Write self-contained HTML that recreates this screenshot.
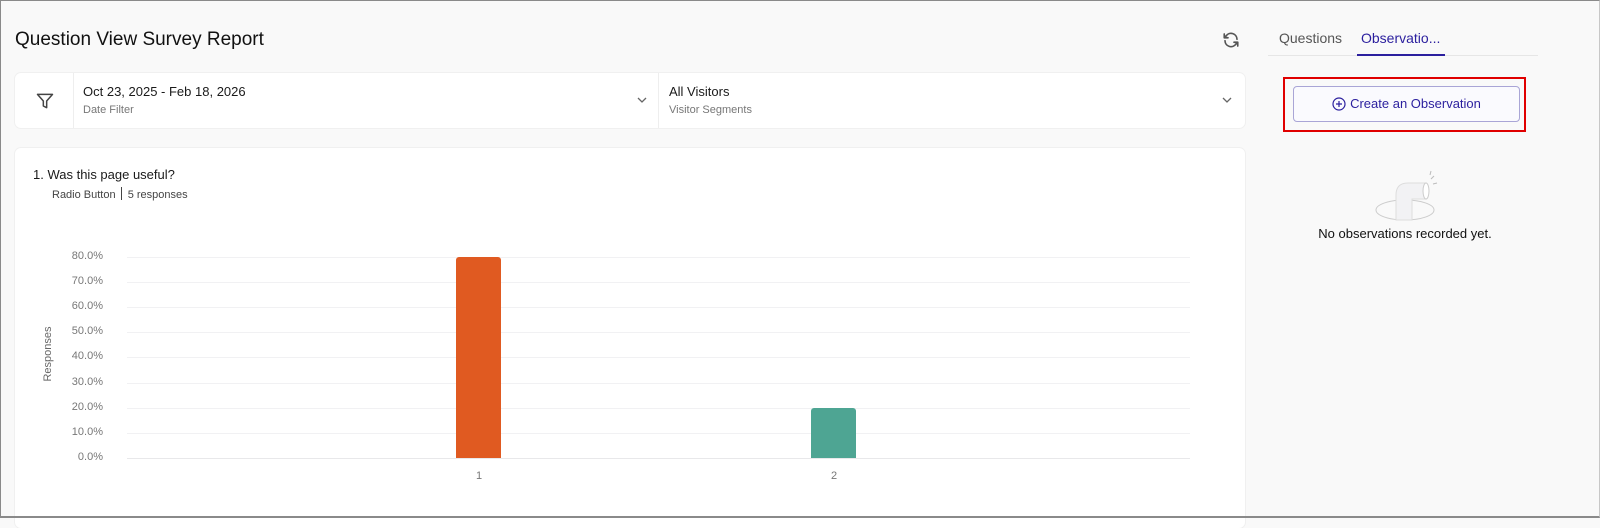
<!DOCTYPE html>
<html><head><style>
*{box-sizing:border-box;margin:0;padding:0}
body{width:1600px;height:518px;overflow:hidden;background:#f9f9f9;font-family:"Liberation Sans",sans-serif;color:#1a1a1a;position:relative}
.frame{position:absolute;left:0;top:0;width:1600px;height:518px;border:1px solid #8a8a8a;border-right:1px solid #c8c8c8;border-bottom:2px solid #8a8a8a}
.abs{position:absolute}
.card{position:absolute;background:#fff;border-radius:6px;box-shadow:0 0 0 1px #f0f0f0}
.grid{position:absolute;left:127px;width:1063px;height:1px;background:#f1f1f3}
.yl{position:absolute;right:1497px;font-size:11px;color:#777;width:60px;text-align:right}
</style></head><body>
<div class="abs" style="left:15px;top:29px;font-size:19px;color:#111">Question View Survey Report</div>
<svg class="abs" style="left:1222px;top:31px" width="18" height="18" viewBox="0 0 24 24" fill="none" stroke="#555" stroke-width="2.2" stroke-linecap="round" stroke-linejoin="round"><path d="M20 11A8 8 0 0 0 5.5 6.5L3 9M3 4v5h5"/><path d="M4 13a8 8 0 0 0 14.5 4.5L21 15M21 20v-5h-5"/></svg>
<div class="abs" style="left:1279px;top:30px;font-size:14px;color:#555">Questions</div>
<div class="abs" style="left:1361px;top:30px;font-size:14px;color:#2b1f9e">Observatio...</div>
<div class="abs" style="left:1268px;top:55px;width:270px;height:1px;background:#e6e6e6"></div>
<div class="abs" style="left:1357px;top:54px;width:88px;height:2px;background:#2b1f9e"></div>

<div class="card" style="left:15px;top:73px;width:1230px;height:55px">
 <div class="abs" style="left:58px;top:0;width:1px;height:55px;background:#eee"></div>
 <div class="abs" style="left:643px;top:0;width:1px;height:55px;background:#eee"></div>
 <svg class="abs" style="left:20px;top:18px" width="20" height="20" viewBox="0 0 24 24" fill="none" stroke="#444" stroke-width="1.8" stroke-linejoin="round"><path d="M3 4h18l-7 8v8l-4-2v-6z"/></svg>
 <div class="abs" style="left:68px;top:11px;font-size:13px">Oct 23, 2025 - Feb 18, 2026</div>
 <div class="abs" style="left:68px;top:31px;font-size:11px;color:#777">Date Filter</div>
 <div class="abs" style="left:654px;top:11px;font-size:13px">All Visitors</div>
 <div class="abs" style="left:654px;top:31px;font-size:11px;color:#777">Visitor Segments</div>
 <svg class="abs" style="left:622px;top:23px" width="10" height="8" viewBox="0 0 10 8" fill="none" stroke="#666" stroke-width="1.3"><path d="M1 2l4 4 4-4"/></svg>
 <svg class="abs" style="left:1207px;top:23px" width="10" height="8" viewBox="0 0 10 8" fill="none" stroke="#666" stroke-width="1.3"><path d="M1 2l4 4 4-4"/></svg>
</div>

<div class="card" style="left:15px;top:148px;width:1230px;height:380px">
 <div class="abs" style="left:18px;top:19px;font-size:13px">1. Was this page useful?</div>
 <div class="abs" style="left:37px;top:39px;font-size:11px;color:#444">Radio Button <span style="display:inline-block;width:1px;height:13px;background:#444;vertical-align:-2px;margin:0 3px 0 2px"></span> 5 responses</div>
</div>
<div class="grid" style="top:257px"></div><div class="grid" style="top:282px"></div><div class="grid" style="top:307px"></div><div class="grid" style="top:332px"></div><div class="grid" style="top:357px"></div><div class="grid" style="top:383px"></div><div class="grid" style="top:408px"></div><div class="grid" style="top:433px"></div><div class="grid" style="top:458px;background:#e8e8ea"></div>
<div class="yl" style="top:250px">80.0%</div><div class="yl" style="top:275px">70.0%</div><div class="yl" style="top:300px">60.0%</div><div class="yl" style="top:325px">50.0%</div><div class="yl" style="top:350px">40.0%</div><div class="yl" style="top:376px">30.0%</div><div class="yl" style="top:401px">20.0%</div><div class="yl" style="top:426px">10.0%</div><div class="yl" style="top:451px">0.0%</div>
<div class="abs" style="left:18px;top:348px;font-size:11px;color:#666;transform:rotate(-90deg);width:60px;text-align:center">Responses</div>
<div class="abs" style="left:456px;top:257px;width:45px;height:201px;background:#e05a21;border-radius:3px 3px 0 0"></div>
<div class="abs" style="left:811px;top:408px;width:45px;height:50px;background:#4ea593;border-radius:3px 3px 0 0"></div>
<div class="abs" style="left:476px;top:470px;font-size:11px;color:#777">1</div>
<div class="abs" style="left:831px;top:470px;font-size:11px;color:#777">2</div>

<div class="abs" style="left:1283px;top:77px;width:243px;height:55px;border:2px solid #e00000"></div>
<div class="abs" style="left:1293px;top:86px;width:227px;height:36px;border:1px solid #a9a5d6;border-radius:4px;background:#fafafe;color:#2b1f9e;font-size:13px;text-align:center;line-height:34px"><svg style="vertical-align:-3px;margin-right:4px" width="14" height="14" viewBox="0 0 14 14" fill="none" stroke="#2b1f9e" stroke-width="1.2"><circle cx="7" cy="7" r="6"/><path d="M7 4v6M4 7h6"/></svg>Create an Observation</div>
<svg class="abs" style="left:1370px;top:165px" width="70" height="60" viewBox="0 0 70 60" fill="none"><ellipse cx="35" cy="45" rx="29" ry="10" stroke="#ccc"/><path d="M26 55V30q0-12 12-12h18v16H42v21z" fill="#f2f2f4" stroke="#ddd"/><ellipse cx="56" cy="26" rx="3" ry="8" fill="#fff" stroke="#ccc"/><path d="M61 14l3-3M63 19l4-1M60 10l1-4" stroke="#bbb"/></svg>
<div class="abs" style="left:1270px;top:226px;width:270px;text-align:center;font-size:13px;color:#111">No observations recorded yet.</div>
<div class="frame"></div>
</body></html>
